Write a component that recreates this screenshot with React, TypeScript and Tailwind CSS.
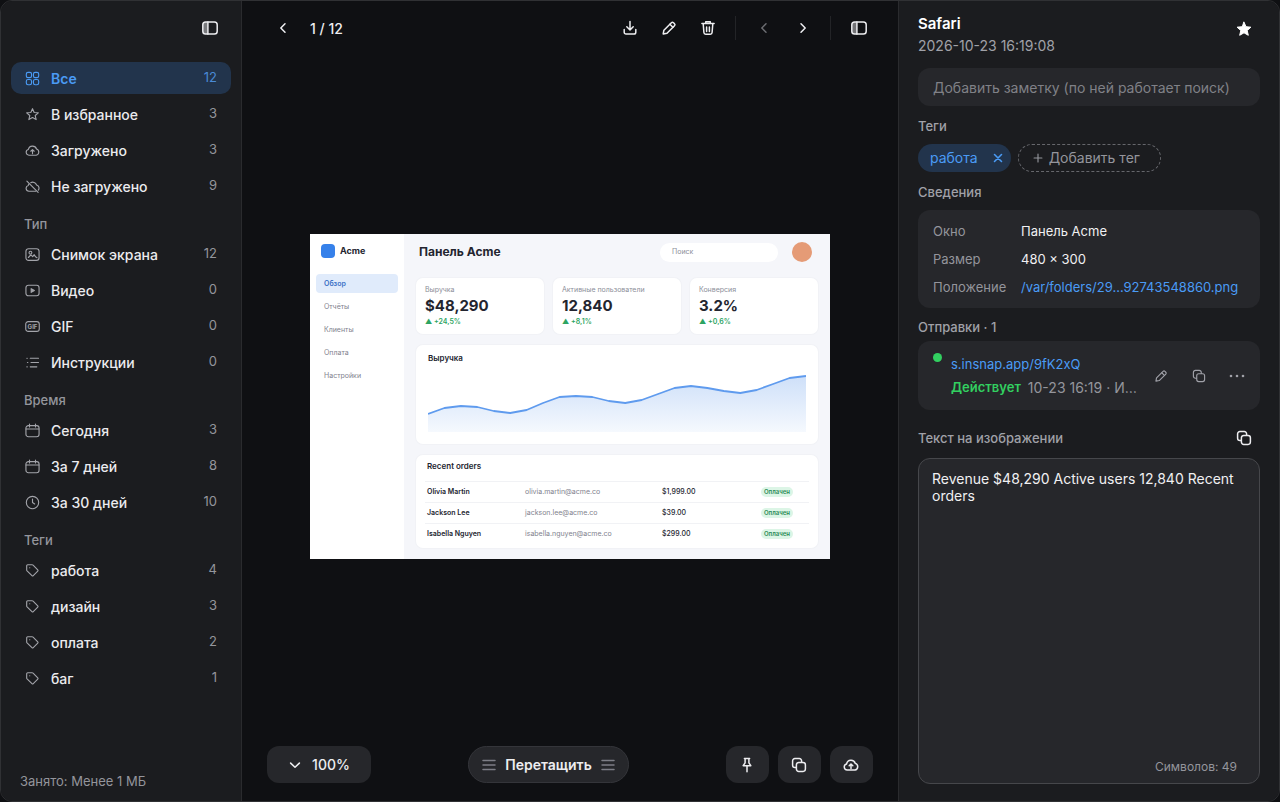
import React, { useState } from "react";

const ICONS = {
  panel: (
    <>
      <path d="M3.6 1.9h2.1v12.2H3.6A2.8 2.8 0 0 1 .8 11.300V4.700a2.800 2.800 0 0 1 2.800-2.800z" fill="currentColor" fillOpacity="0.45" stroke="none" />
      <rect x="0.8" y="1.9" width="14.4" height="12.2" rx="2.8" />
      <path d="M5.9 2v12" />
    </>
  ),
  grid: (
    <>
      <rect x="1.4" y="1.4" width="5.6" height="5.6" rx="1.8" />
      <rect x="9" y="1.4" width="5.6" height="5.6" rx="1.8" />
      <rect x="1.4" y="9" width="5.6" height="5.6" rx="1.8" />
      <rect x="9" y="9" width="5.6" height="5.6" rx="1.8" />
    </>
  ),
  star: <path d="M8 1.8l1.8 4 4.400.4-3.300 2.900 1 4.300L8 11.200l-3.900 2.200 1-4.300L1.800 6.200l4.400-.4z" />,
  starFilled: <path d="M8 1.2l2 4.5 4.9.5-3.7 3.3 1.1 4.8L8 11.8l-4.3 2.5 1.1-4.8L1.1 6.2 6 5.7z" fill="currentColor" />,
  cloudUp: (
    <>
      <path d="M4.2 13a3.1 3.100 0 0 1-.6-6.100 4.500 4.500 0 0 1 8.700-.5 3.400 3.400 0 0 1-.4 6.600z" />
      <path d="M8 11.400V7.200M6.200 8.800L8 7l1.800 1.800" />
    </>
  ),
  cloudOff: (
    <>
      <path d="M4.200 5.400a3.200 3.200 0 0 0-.7 1.500A3.100 3.100 0 0 0 4.200 13h7.200M6.100 3.900a4.400 4.400 0 0 1 6.200 2.500 3.400 3.400 0 0 1 1.900 5.400" />
      <path d="M2 2.200l12 12" />
    </>
  ),
  image: (
    <>
      <rect x="1" y="1.800" width="14" height="12.400" rx="2.800" />
      <circle cx="5.800" cy="6" r="1.500" />
      <path d="M3.600 11.200l2.600-2.800 2 1.900 1.600-2.100 1.500 2.300 1.500.9" />
    </>
  ),
  video: (
    <>
      <rect x="1" y="2.400" width="14" height="11.200" rx="2.600" />
      <path d="M6.600 6v4l3.400-2z" fill="currentColor" />
    </>
  ),
  list: (
    <>
      <path d="M5.600 3.400h8.800M6.400 8h8M5.600 12.600h7" />
      <path d="M2 3.400h.4M2.600 8h.4M2 12.600h.4" />
    </>
  ),
  calendar: (
    <>
      <rect x="1" y="2.800" width="14" height="11.800" rx="2.600" />
      <path d="M1.200 6.400h13.600M4.800 1.200v3M11.200 1.200v3" />
    </>
  ),
  clock: (
    <>
      <circle cx="8" cy="8" r="6.600" />
      <path d="M8 4.200V8l2.300 1.600" />
    </>
  ),
  tag: (
    <>
      <path d="M1.800 2.900a1 1 0 0 1 1-1h4.800a1.500 1.500 0 0 1 1 .4l5 5a1 1 0 0 1 0 1.400l-4.800 4.800a1 1 0 0 1-1.400 0l-5.200-5a1.500 1.500 0 0 1-.4-1z" />
      <path d="M5 5.100h.1" />
    </>
  ),
  left: <path d="M10 3.800L5.800 8l4.200 4.200" />,
  right: <path d="M6 3.800L10.200 8 6 12.200" />,
  down: <path d="M3 5.800L8 10.600l5-4.800" />,
  download: <path d="M8 1.600v8.200M4.800 6.800L8 10l3.200-3.200M2.200 9.600v2.600A1.800 1.800 0 0 0 4 14h8a1.800 1.800 0 0 0 1.800-1.800V9.600" />,
  pencil: (
    <>
      <path d="M2.200 13.900l.7-3.700 7.500-7.500a1.500 1.500 0 0 1 2.100 0l1 1a1.500 1.500 0 0 1 0 2.100L6 13.200z" />
      <path d="M8.900 4.300l3 3" />
    </>
  ),
  trash: (
    <path d="M1.900 3.600h12.200M5.700 3.400V1.700h4.600v1.700M3.200 3.800l.7 8.700a1.800 1.800 0 0 0 1.800 1.700h4.600a1.800 1.800 0 0 0 1.800-1.700l.7-8.700M6.600 7v4.400M9.400 7v4.400" />
  ),
  pin: <path d="M5.400 1.400h5.200M6.100 1.600v4.200L4.200 8.700h7.600L9.900 5.800V1.600M8 8.900v5.900" />,
  copy: (
    <>
      <rect x="5.400" y="5.400" width="9" height="9" rx="2.300" />
      <path d="M5.200 10.600H3.900a2.300 2.300 0 0 1-2.300-2.300V3.900a2.300 2.300 0 0 1 2.300-2.300h4.400a2.300 2.300 0 0 1 2.300 2.300v1.300" />
    </>
  ),
  grip: <path d="M2 3.500h12M2 8h12M2 12.500h12" />,
  close: <path d="M4 4l8 8M12 4l-8 8" />,
  plus: <path d="M8 3.500v9M3.500 8h9" />,
  dots: (
    <g fill="currentColor" stroke="none">
      <circle cx="2" cy="8" r="1.300" />
      <circle cx="8" cy="8" r="1.300" />
      <circle cx="14" cy="8" r="1.300" />
    </g>
  ),
  gif: (
    <>
      <rect x="0.800" y="2.800" width="14.400" height="10.400" rx="2.600" />
      <text x="8" y="10.300" textAnchor="middle" fontSize="6.500" fontWeight="700" fill="currentColor" stroke="none">
        GIF
      </text>
    </>
  ),
};

type IconName = keyof typeof ICONS;

function Icon({ name, size = 16, weight = 1.5 }: { name: IconName; size?: number; weight?: number }) {
  return (
    <svg
      width={size}
      height={size}
      viewBox="0 0 16 16"
      fill="none"
      stroke="currentColor"
      strokeWidth={weight}
      strokeLinecap="round"
      strokeLinejoin="round"
      className="shrink-0"
      aria-hidden="true"
    >
      {ICONS[name]}
    </svg>
  );
}

type Item = { id: string; icon: IconName; label: string; count: number };

const SECTIONS: { title?: string; items: Item[] }[] = [
  {
    items: [
      { id: "all", icon: "grid", label: "Все", count: 12 },
      { id: "fav", icon: "star", label: "В избранное", count: 3 },
      { id: "uploaded", icon: "cloudUp", label: "Загружено", count: 3 },
      { id: "local", icon: "cloudOff", label: "Не загружено", count: 9 },
    ],
  },
  {
    title: "Тип",
    items: [
      { id: "shot", icon: "image", label: "Снимок экрана", count: 12 },
      { id: "video", icon: "video", label: "Видео", count: 0 },
      { id: "gif", icon: "gif", label: "GIF", count: 0 },
      { id: "guides", icon: "list", label: "Инструкции", count: 0 },
    ],
  },
  {
    title: "Время",
    items: [
      { id: "today", icon: "calendar", label: "Сегодня", count: 3 },
      { id: "week", icon: "calendar", label: "За 7 дней", count: 8 },
      { id: "month", icon: "clock", label: "За 30 дней", count: 10 },
    ],
  },
  {
    title: "Теги",
    items: [
      { id: "work", icon: "tag", label: "работа", count: 4 },
      { id: "design", icon: "tag", label: "дизайн", count: 3 },
      { id: "payment", icon: "tag", label: "оплата", count: 2 },
      { id: "bug", icon: "tag", label: "баг", count: 1 },
    ],
  },
];

function Sidebar() {
  const [active, setActive] = useState("all");

  return (
    <aside className="w-[241px] shrink-0 flex flex-col bg-[#1b1c1f] border-r border-[#2a2b2e] px-[10px]">
      <div className="h-[61px] shrink-0 flex items-start justify-end pt-[11px] pr-[5px]">
        <button type="button" aria-label="Скрыть боковую панель" className="size-8 flex items-center justify-center text-[#ededf0]">
          <Icon name="panel" />
        </button>
      </div>
      <nav>
        {SECTIONS.map((section, i) => (
          <div key={i}>
            {section.title && (
              <h2 className="mt-3 mb-1 px-[13px] text-[13px] leading-5 font-medium text-[#94959c]">{section.title}</h2>
            )}
            <ul className="flex flex-col gap-1">
              {section.items.map(item => {
                const on = item.id === active;
                return (
                  <li key={item.id}>
                    <button
                      type="button"
                      onClick={() => setActive(item.id)}
                      className={`w-full h-8 flex items-center gap-[11px] rounded-[10px] px-[14px] text-left ${
                        on ? "bg-[#22344c] text-[#4a9bf5]" : "text-[#ebebee]"
                      }`}
                    >
                      <span className={on ? "" : "text-[#a3a4aa]"}>
                        <Icon name={item.icon} size={15} weight={1.2} />
                      </span>
                      <span className={`flex-1 text-[14px] ${on ? "font-semibold" : "font-medium"}`}>{item.label}</span>
                      <span className={`text-[13px] ${on ? "text-[#4a8ad6]" : "text-[#94959c]"}`}>{item.count}</span>
                    </button>
                  </li>
                );
              })}
            </ul>
          </div>
        ))}
      </nav>
      <p className="mt-auto px-[9px] pb-[10px] text-[13px] leading-5 text-[#94959c]">Занято: Менее 1 МБ</p>
    </aside>
  );
}

function ToolButton({ icon, label, disabled }: { icon: IconName; label: string; disabled?: boolean }) {
  return (
    <button
      type="button"
      aria-label={label}
      disabled={disabled}
      className="w-[39px] h-8 flex items-center justify-center text-[#ededf0] disabled:text-[#6a6b70]"
    >
      <Icon name={icon} />
    </button>
  );
}

const STATS = [
  { label: "Выручка", value: "$48,290", delta: "+24,5%" },
  { label: "Активные пользователи", value: "12,840", delta: "+8,1%" },
  { label: "Конверсия", value: "3.2%", delta: "+0,6%" },
];

const ORDERS = [
  { name: "Olivia Martin", email: "olivia.martin@acme.co", sum: "$1,999.00" },
  { name: "Jackson Lee", email: "jackson.lee@acme.co", sum: "$39.00" },
  { name: "Isabella Nguyen", email: "isabella.nguyen@acme.co", sum: "$299.00" },
];

const REVENUE = [18, 24, 26, 25, 21, 19, 22, 29, 35, 36, 35, 31, 29, 32, 38, 44, 46, 44, 41, 39, 42, 48, 54, 56];

function RevenueChart() {
  const step = 378 / (REVENUE.length - 1);
  const line = REVENUE.map((v, i) => `${i * step},${58 - v}`).join(" ");

  return (
    <svg viewBox="0 0 378 58" className="w-full h-auto" role="img" aria-label="График выручки">
      <defs>
        <linearGradient id="revenue" x1="0" y1="0" x2="0" y2="1">
          <stop offset="0" stopColor="#3b82e6" stopOpacity="0.25" />
          <stop offset="1" stopColor="#3b82e6" stopOpacity="0.05" />
        </linearGradient>
      </defs>
      <polygon points={`0,58 ${line} 378,58`} fill="url(#revenue)" />
      <polyline points={line} fill="none" stroke="#5f9bee" strokeWidth="1.8" strokeLinejoin="round" />
    </svg>
  );
}

function Preview() {
  return (
    <div className="w-[520px] flex bg-[#f5f6fa] text-[7px] leading-[10px] text-[#23252f]">
      <div className="w-[94px] bg-white px-[6px] pt-[10px]">
        <div className="flex items-center gap-[5px] pl-[5px]">
          <span className="size-[14px] rounded-[4px] bg-[#3681ea]" />
          <span className="text-[9px] font-bold">Acme</span>
        </div>
        <ul className="mt-4 flex flex-col gap-1">
          {["Обзор", "Отчёты", "Клиенты", "Оплата", "Настройки"].map((label, i) => (
            <li
              key={label}
              className={`h-[19px] flex items-center rounded-[4px] px-2 ${
                i === 0 ? "bg-[#e0ebfb] font-semibold text-[#3a70c6]" : "text-[#7f828e]"
              }`}
            >
              {label}
            </li>
          ))}
        </ul>
      </div>
      <div className="flex-1 px-3 pt-2 pb-[11px]">
        <div className="flex items-center">
          <h3 className="flex-1 pl-[3px] text-[12px] leading-5 font-bold">Панель Acme</h3>
          <span className="w-[118px] h-[19px] rounded-full bg-white px-3 flex items-center text-[#8b8e99]">Поиск</span>
          <span className="ml-[14px] mr-[6px] size-5 rounded-full bg-[#e59b76]" />
        </div>
        <div className="mt-4 grid grid-cols-3 gap-[9px]">
          {STATS.map(s => (
            <div key={s.label} className="h-14 rounded-[7px] bg-white ring-1 ring-[#f1f2f6] px-[9px] pt-[7px]">
              <div className="text-[#8b8e99]">{s.label}</div>
              <div className="mt-[3px] text-[15px] leading-4 font-bold">{s.value}</div>
              <div className="mt-[3px] font-semibold text-[#2da462]">▲ {s.delta}</div>
            </div>
          ))}
        </div>
        <div className="mt-[11px] h-[99px] rounded-[7px] bg-white ring-1 ring-[#f1f2f6] px-3 pt-2">
          <h4 className="text-[8px] font-semibold">Выручка</h4>
          <div className="mt-[11px]">
            <RevenueChart />
          </div>
        </div>
        <div className="mt-[11px] h-[93px] rounded-[7px] bg-white ring-1 ring-[#f1f2f6] px-[9px] pt-[6px]">
          <h4 className="pl-[2px] pb-[10px] text-[8px] font-semibold">Recent orders</h4>
          <table className="w-full table-fixed">
            <tbody>
              {ORDERS.map(o => (
                <tr key={o.name} className="h-[21px] border-t border-[#f1f2f5]">
                  <td className="w-[98px] pl-[2px] font-semibold">{o.name}</td>
                  <td className="w-[137px] pl-[2px] text-[#7f828e]">{o.email}</td>
                  <td className="w-[101px] pl-[2px] font-medium">{o.sum}</td>
                  <td>
                    <span className="inline-block rounded-full bg-[#dcf5e6] px-[3px] text-[6px] font-semibold text-[#2b8a55]">Оплачен</span>
                  </td>
                </tr>
              ))}
            </tbody>
          </table>
        </div>
      </div>
    </div>
  );
}

function Viewer() {
  return (
    <main className="flex-1 min-w-0 flex flex-col bg-[#0f1013]">
      <header className="h-[54px] shrink-0 flex items-center pl-[21px] pr-5">
        <ToolButton icon="left" label="Назад" />
        <span className="pl-2 text-[14px] font-medium text-[#ededf0]">1 / 12</span>
        <div className="ml-auto flex items-center">
          <ToolButton icon="download" label="Скачать" />
          <ToolButton icon="pencil" label="Изменить" />
          <ToolButton icon="trash" label="Удалить" />
          <span className="mx-2 w-px h-6 bg-[#232427]" />
          <ToolButton icon="left" label="Предыдущий" disabled />
          <ToolButton icon="right" label="Следующий" />
          <span className="mx-2 w-px h-6 bg-[#232427]" />
          <ToolButton icon="panel" label="Панель сведений" />
        </div>
      </header>
      <div className="flex-1 flex items-center justify-center">
        <Preview />
      </div>
      <footer className="shrink-0 flex items-center justify-between px-[25px] pt-2 pb-[18px] text-[14px] font-medium text-[#ededf0]">
        <button type="button" className="w-[104px] h-[37px] flex items-center justify-center gap-[10px] rounded-xl bg-[#26272b]">
          <Icon name="down" size={14} weight={1.8} />
          100%
        </button>
        <button type="button" className="h-[37px] flex items-center gap-2 rounded-full border border-[#34353a] bg-[#26272b] px-3 font-semibold">
          <span className="text-[#7d7e86]">
            <Icon name="grip" />
          </span>
          Перетащить
          <span className="text-[#7d7e86]">
            <Icon name="grip" />
          </span>
        </button>
        <div className="flex gap-[9px]">
          <button type="button" aria-label="Закрепить" className="w-[43px] h-[37px] flex items-center justify-center rounded-xl bg-[#26272b]">
            <Icon name="pin" />
          </button>
          <button type="button" aria-label="Копировать" className="w-[43px] h-[37px] flex items-center justify-center rounded-xl bg-[#26272b]">
            <Icon name="copy" />
          </button>
          <button type="button" aria-label="Загрузить" className="w-[43px] h-[37px] flex items-center justify-center rounded-xl bg-[#26272b]">
            <Icon name="cloudUp" />
          </button>
        </div>
      </footer>
    </main>
  );
}

function Details() {
  const [note, setNote] = useState("");
  const [text, setText] = useState("Revenue $48,290 Active users 12,840 Recent orders");

  return (
    <aside className="w-[381px] shrink-0 flex flex-col bg-[#1b1c1f] border-l border-[#2a2b2e] px-[19px] pb-[17px] text-[13px] leading-5">
      <div className="flex items-start justify-between pt-3">
        <div>
          <h1 className="text-[15px] leading-[22px] font-semibold text-white">Safari</h1>
          <p className="text-[14px] leading-[22px] text-[#a0a1a8]">2026-10-23 16:19:08</p>
        </div>
        <button type="button" aria-label="В избранном" className="size-8 flex items-center justify-center text-white">
          <Icon name="starFilled" weight={1} />
        </button>
      </div>
      <input
        type="text"
        aria-label="Заметка"
        value={note}
        onChange={e => setNote(e.target.value)}
        placeholder="Добавить заметку (по ней работает поиск)"
        className="mt-[11px] h-[38px] shrink-0 rounded-xl bg-[#26272b] px-[15px] text-[14px] text-[#ededf0] placeholder:text-[#808187] outline-none"
      />

      <h2 className="mt-[10px] font-medium text-[#a0a1a8]">Теги</h2>
      <div className="mt-2 flex gap-[7px]">
        <span className="h-7 flex items-center gap-[13px] rounded-full bg-[#22344c] pl-3 pr-[6px] text-[14px] text-[#4a9bf5]">
          работа
          <button type="button" aria-label="Убрать тег работа">
            <Icon name="close" size={14} weight={1.8} />
          </button>
        </span>
        <button type="button" className="w-[143px] h-7 flex items-center gap-1 rounded-full border border-dashed border-[#66676c] px-3 text-[14px] text-[#94959c]">
          <Icon name="plus" size={14} weight={1.3} />
          Добавить тег
        </button>
      </div>

      <h2 className="mt-[10px] font-medium text-[#a0a1a8]">Сведения</h2>
      <dl className="mt-2 grid grid-cols-[88px_1fr] gap-y-2 rounded-xl bg-[#26272b] pl-[15px] pr-3 py-[11px] text-[#f0f0f2]">
        <dt className="text-[#94959c]">Окно</dt>
        <dd>Панель Acme</dd>
        <dt className="text-[#94959c]">Размер</dt>
        <dd>480 × 300</dd>
        <dt className="text-[#94959c]">Положение</dt>
        <dd>
          <a href="#file" className="text-[#4a9bf5] whitespace-nowrap">/var/folders/29…92743548860.png</a>
        </dd>
      </dl>

      <h2 className="mt-[9px] font-medium text-[#a0a1a8]">Отправки · 1</h2>
      <div className="mt-1 h-[69px] shrink-0 flex items-center rounded-xl bg-[#26272b] pl-[15px] pr-1">
        <span className="mb-9 size-[9px] rounded-full bg-[#32d060]" />
        <div className="ml-[9px] flex-1 min-w-0 leading-[23px]">
          <a href="#share" className="text-[#4a9bf5]">s.insnap.app/9fK2xQ</a>
          <p className="flex gap-[7px] whitespace-nowrap text-[#94959c]">
            <b className="font-semibold text-[#32d060]">Действует</b>
            <span className="text-[14px]">10-23 16:19 · И…</span>
          </p>
        </div>
        <div className="flex text-[#a0a1a8]">
          <button type="button" aria-label="Изменить ссылку" className="w-[38px] h-8 flex items-center justify-center">
            <Icon name="pencil" size={14} weight={1.3} />
          </button>
          <button type="button" aria-label="Копировать ссылку" className="w-[38px] h-8 flex items-center justify-center">
            <Icon name="copy" size={14} weight={1.3} />
          </button>
          <button type="button" aria-label="Ещё" className="w-[38px] h-8 flex items-center justify-center">
            <Icon name="dots" />
          </button>
        </div>
      </div>

      <div className="mt-3 flex items-center justify-between">
        <label htmlFor="ocr" className="font-medium text-[#a0a1a8]">Текст на изображении</label>
        <button type="button" aria-label="Копировать текст" className="size-8 flex items-center justify-center text-[#ededf0]">
          <Icon name="copy" />
        </button>
      </div>
      <div className="mt-1 flex-1 flex flex-col rounded-xl border border-[#46474b] bg-[#26272b]">
        <textarea
          id="ocr"
          value={text}
          onChange={e => setText(e.target.value)}
          className="flex-1 resize-none bg-transparent px-[13px] pt-[11px] text-[14px] leading-[17px] text-[#f0f0f2] outline-none"
        />
        <p className="px-[22px] pb-[6px] text-right text-[12px] text-[#94959c]">Символов: {text.length}</p>
      </div>
    </aside>
  );
}

export default function App() {
  return (
    <div className="min-h-screen flex bg-[#0f1013] font-['Inter','Noto_Sans',sans-serif]">
      <div className="flex-1 flex overflow-hidden rounded-xl border border-[#303134]">
        <Sidebar />
        <Viewer />
        <Details />
      </div>
    </div>
  );
}
